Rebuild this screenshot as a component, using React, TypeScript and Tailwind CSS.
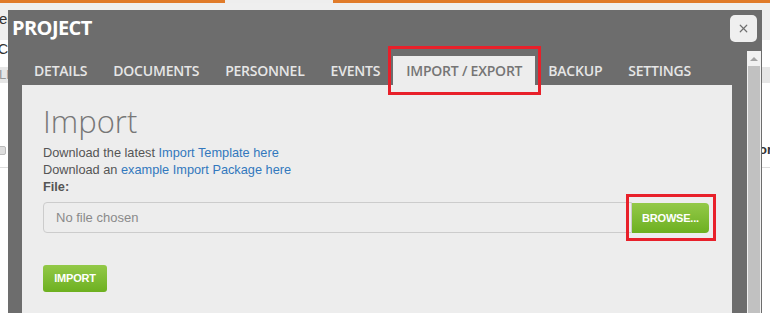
import { X } from "lucide-react";

const tabs = ["DETAILS", "DOCUMENTS", "PERSONNEL", "EVENTS", "IMPORT / EXPORT", "BACKUP", "SETTINGS"];
const active = "IMPORT / EXPORT";

function Backdrop() {
    return (
        <div className="flex flex-col h-[313px] bg-white text-[#333] text-[13px]">
            <div className="flex h-[3px]">
                <div className="w-[225px] bg-[#e07b2a]" />
                <div className="w-[108px] bg-[#eeeeee]" />
                <div className="flex-1 bg-[#e07b2a]" />
            </div>
            <div className="h-[37px] bg-[#efefef] flex items-center pb-[4px]">
                <span className="text-[15px] ml-[-1px]">er</span>
            </div>
            <div className="h-[25px] bg-white flex items-center pb-[6px]">
                <span className="text-[14px] ml-[-2px]">CT</span>
            </div>
            <div className="h-[2px]" />
            <div className="h-[16px] bg-[#e6e6e6] flex items-center text-[#999]">
                <span className="text-[13px] ml-[-1px]">LE</span>
            </div>
            <div className="h-[62px]" />
            <div className="flex justify-between items-center h-[10px]">
                <div className="w-[8px] h-[9px] bg-[#ddd] border border-[#bbb] rounded-[2px] ml-[-2px]" />
                <span className="font-bold mr-[-2px]">or</span>
            </div>
            <div className="border-b border-[#ddd] h-[13px]" />
        </div>
    );
}

function GreenButton({ children, className }: { children: React.ReactNode; className?: string }) {
    return (
        <button
            className={`bg-gradient-to-b from-[#93c947] to-[#6db01f] text-white font-bold text-[11px] tracking-[-0.2px] ${className ?? ""}`}
        >
            {children}
        </button>
    );
}

export default function App() {
    return (
        <div className="relative w-[770px] h-[313px] overflow-hidden" style={{ fontFamily: "'Liberation Sans', Arial, sans-serif" }}>
            <Backdrop />

            {/* modal */}
            <div className="absolute left-[8px] top-[10px] w-[754px] bottom-0 bg-[#6d6d6d] flex flex-col">
                <div className="h-[41px] flex justify-between items-start">
                    <h1 className="text-white font-bold text-[20px] tracking-[-0.6px] pl-[4px] pt-[6px] leading-[24px] font-['Open_Sans',sans-serif]">
                        PROJECT
                    </h1>
                    <button className="mt-[5px] mr-[5px] w-[27px] h-[27px] rounded-[5px] bg-[#efefef] flex items-center justify-center text-[#707070]">
                        <X size={13} strokeWidth={2.2} />
                    </button>
                </div>

                <div className="flex flex-1 min-h-0">
                    <div className="flex-1 pl-[13px] pr-[15px] flex flex-col">
                        <div className="flex pt-[5px] h-[34px] font-['Open_Sans',sans-serif]">
                            {tabs.map((t) => (
                                <div
                                    key={t}
                                    className={`px-[13px] h-[29px] flex items-center text-[14px] font-semibold tracking-[-0.22px] ${
                                        t === active ? "bg-[#ededed] text-[#757575]" : "text-[#e6e6e6]"
                                    }`}
                                >
                                    {t}
                                </div>
                            ))}
                        </div>
                        <div className="flex-1 bg-[#ededed] ml-[1px] pl-[21px] pr-[23px] pt-[18px]">
                            <h2 className="text-[31px] leading-[37px] font-light text-[#777] font-['Open_Sans',sans-serif]">
                                Import
                            </h2>
                            <div className="mt-[4px] text-[12.75px] leading-[17px] text-[#555]">
                                <p>
                                    Download the latest <a className="text-[#3278bd]">Import Template here</a>
                                </p>
                                <p>
                                    Download an <a className="text-[#3278bd]">example Import Package here</a>
                                </p>
                                <p className="font-bold">File:</p>
                            </div>
                            <div className="flex mt-[7px] h-[31px]">
                                <div className="flex-1 border border-[#cccccc] rounded-l-[4px] flex items-center pl-[12px] text-[13px] text-[#8a8a8a]">
                                    No file chosen
                                </div>
                                <GreenButton className="w-[77px] h-[30px] mt-[1px] rounded-r-[4px]">BROWSE...</GreenButton>
                            </div>
                            <GreenButton className="mt-[32px] w-[64px] h-[27px] rounded-[3px]">IMPORT</GreenButton>
                        </div>
                    </div>

                    {/* scrollbar */}
                    <div className="w-[14px] mr-[1px] bg-[#f1f1f1] flex flex-col items-center">
                        <div className="h-[15px] flex items-center justify-center">
                            <div className="w-0 h-0 border-l-[4px] border-r-[4px] border-b-[4px] border-l-transparent border-r-transparent border-b-[#a3a3a3]" />
                        </div>
                        <div className="w-[12px] flex-1 bg-[#c1c1c1]" />
                    </div>
                </div>
            </div>

            {/* annotation boxes */}
            <div className="absolute left-[388px] top-[46px] w-[153px] h-[49px] border-[3px] border-[#e8202a]" />
            <div className="absolute left-[626px] top-[194px] w-[90px] h-[47px] border-[3px] border-[#e8202a]" />
        </div>
    );
}
